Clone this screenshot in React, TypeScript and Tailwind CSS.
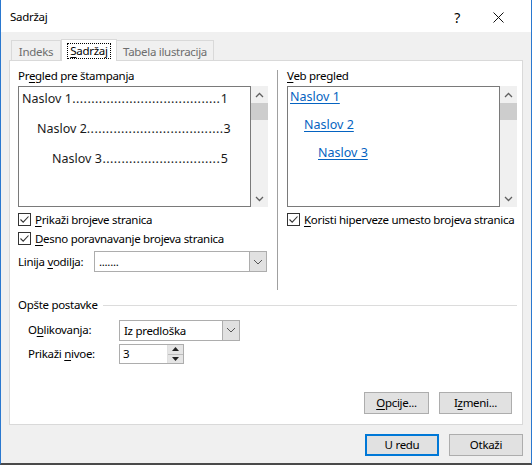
import { useState } from "react";

const font = { fontFamily: '"Noto Sans", "Segoe UI", sans-serif' };

function Check({ label, u }: { label: string; u: number }) {
  return (
    <div className="flex items-center h-[19px]">
      <div className="w-[13px] h-[13px] border border-[#333] bg-white flex items-center justify-center">
        <svg width="11" height="11" viewBox="0 0 11 11">
          <path d="M1.5 5.5 L4.2 8.2 L9.5 2.5" fill="none" stroke="#333" strokeWidth="1.1" />
        </svg>
      </div>
      <span className="ml-[4px] text-[11.5px] text-black">
        <Acc text={label} i={u} />
      </span>
    </div>
  );
}

// underline one access-key letter
function Acc({ text, i }: { text: string; i: number }) {
  return (
    <>
      {text.slice(0, i)}
      <span className="underline underline-offset-2">{text[i]}</span>
      {text.slice(i + 1)}
    </>
  );
}

function Chevron({ up }: { up?: boolean }) {
  return (
    <svg width="9" height="6" viewBox="0 0 9 6">
      <path d={up ? "M1 5 L4.5 1.5 L8 5" : "M1 1 L4.5 4.5 L8 1"} fill="none" stroke="#606060" strokeWidth="1.3" />
    </svg>
  );
}

function Scrollbar() {
  return (
    <div className="w-[17px] bg-[#f0f0f0] flex flex-col items-center">
      <div className="h-[17px] flex items-center justify-center">
        <Chevron up />
      </div>
      <div className="w-[17px] h-[17px] bg-[#cdcdcd]" />
      <div className="flex-1" />
      <div className="h-[17px] flex items-center justify-center">
        <Chevron />
      </div>
    </div>
  );
}

function Select({ value, w }: { value: string; w: string }) {
  return (
    <div className={`${w} h-[21px] border border-[#adadad] bg-white flex items-stretch`}>
      <div className="flex-1 px-[4px] text-[11.5px] leading-[19px] text-black">{value}</div>
      <div className="w-[17px] bg-[#e1e1e1] border-l border-[#adadad] flex items-center justify-center">
        <svg width="10" height="6" viewBox="0 0 10 6">
          <path d="M1 1 L5 5 L9 1" fill="none" stroke="#555" strokeWidth="1" />
        </svg>
      </div>
    </div>
  );
}

function TocLine({ title, page, dots, indent }: { title: string; page: string; dots: number; indent: string }) {
  return (
    <div className={`flex items-baseline justify-between text-[12.5px] text-[#1a1a1a] h-[30px] leading-[22px] tracking-normal ${indent}`}>
      <span className="whitespace-nowrap">{title}</span>
      <span className="whitespace-nowrap tracking-[0.45px]">{".".repeat(dots)}</span>
      <span>{page}</span>
    </div>
  );
}

function Btn({ children, primary, w }: { children: React.ReactNode; primary?: boolean; w: string }) {
  return (
    <button
      className={`${w} h-[22px] bg-[#e1e1e1] text-[11.5px] text-black ${
        primary ? "border-2 border-[#0078d7]" : "border border-[#adadad]"
      }`}
    >
      {children}
    </button>
  );
}

export default function App() {
  const [tab] = useState("Sadržaj");
  return (
    <div style={font} className="w-[532px] h-[465px] bg-[#f0f0f0] border-l border-r border-[#2a78cf] border-b-2 border-b-[#4a4a4a] flex flex-col overflow-hidden tracking-[-0.3px]">
      {/* title bar */}
      <div className="h-[32px] bg-white flex items-center pl-[9px] pt-[2px] shrink-0">
        <span className="text-[11.5px] text-black">Sadržaj</span>
        <span className="ml-auto text-[14px] text-black mr-[33px]">?</span>
        <svg width="11" height="11" viewBox="0 0 11 11" className="mr-[27px]">
          <path d="M0.5 0.5 L10.5 10.5 M10.5 0.5 L0.5 10.5" stroke="#111" strokeWidth="1" />
        </svg>
      </div>

      {/* tabs */}
      <div className="flex items-end h-[29px] pl-[10px] mt-[-1px] relative z-10">
        <div className="w-[50px] h-[20px] pt-[2px] border border-b-0 border-[#d9d9d9] bg-[#f0f0f0] text-[11.5px] text-[#6d6d6d] flex items-center justify-center">
          Indeks
        </div>
        <div className="w-[56px] h-[22px] border border-b-0 border-[#d9d9d9] bg-white text-[11.5px] text-black flex items-center justify-center mb-[-1px] pt-[1px]">
          <span className="border border-dotted border-black px-[2px] leading-[14px]">
            <Acc text={tab} i={0} />
          </span>
        </div>
        <div className="w-[97px] h-[20px] pt-[2px] border border-b-0 border-l-0 border-[#d9d9d9] bg-[#f0f0f0] text-[11.5px] text-[#6d6d6d] flex items-center justify-center">
          Tabela ilustracija
        </div>
      </div>

      {/* panel */}
      <div className="ml-[8px] w-[514px] h-[365px] bg-white border border-[#d9d9d9] flex flex-col shrink-0">
        <div className="flex h-[235px] pt-[7px]">
          {/* left column */}
          <div className="w-[267px] pl-[8px] flex flex-col">
            <div className="text-[11.5px] text-black h-[18px] leading-[16px]">
              <Acc text="Pregled pre štampanja" i={2} />
            </div>
            <div className="flex h-[121px]">
              <div className="w-[233px] border border-[#7a7a7a] pl-[3px] pr-[22px] pt-[1px]">
                <TocLine title="Naslov 1 " page="1" dots={39} indent="" />
                <TocLine title="Naslov 2" page="3" dots={36} indent="pl-[15px]" />
                <TocLine title="Naslov 3" page="5" dots={31} indent="pl-[30px]" />
              </div>
              <Scrollbar />
            </div>
            <div className="mt-[3px] flex flex-col">
              <Check label="Prikaži brojeve stranica" u={0} />
              <Check label="Desno poravnavanje brojeva stranica" u={0} />
            </div>
            <div className="flex items-center mt-[3px]">
              <span className="text-[11.5px] text-black w-[76px]">
                <Acc text="Linija vodilja:" i={7} />
              </span>
              <Select value="......." w="w-[173px]" />
            </div>
          </div>

          {/* divider */}
          <div className="w-px bg-[#a0a0a0] mt-[2px] mb-[6px]" />

          {/* right column */}
          <div className="flex-1 pl-[9px] flex flex-col">
            <div className="text-[11.5px] text-black h-[18px] leading-[16px]">
              <Acc text="Veb pregled" i={0} />
            </div>
            <div className="flex h-[121px]">
              <div className="w-[213px] border border-[#7a7a7a] pl-[2px] text-[12.5px] tracking-normal text-[#0563c1] flex flex-col items-start">
                <span className="h-[28px] leading-[20px] underline underline-offset-2">Naslov 1</span>
                <span className="h-[28px] leading-[20px] underline underline-offset-2 ml-[14px]">Naslov 2</span>
                <span className="h-[28px] leading-[20px] underline underline-offset-2 ml-[28px]">Naslov 3</span>
              </div>
              <Scrollbar />
            </div>
            <div className="mt-[3px]">
              <Check label="Koristi hiperveze umesto brojeva stranica" u={0} />
            </div>
          </div>
        </div>

        {/* general options */}
        <div className="flex items-center pl-[8px] pr-[5px] h-[18px]">
          <span className="text-[11.5px] text-black">Opšte postavke</span>
          <div className="flex-1 h-px bg-[#dcdcdc] ml-[5px]" />
        </div>
        <div className="pl-[18px] flex flex-col mt-[4px]">
          <div className="flex items-center h-[24px]">
            <span className="w-[91px] text-[11.5px] text-black">
              <Acc text="Oblikovanja:" i={1} />
            </span>
            <Select value="Iz predloška" w="w-[121px]" />
          </div>
          <div className="flex items-center h-[24px]">
            <span className="w-[91px] text-[11.5px] text-black">
              <Acc text="Prikaži nivoe:" i={8} />
            </span>
            <div className="w-[65px] h-[20px] border border-[#adadad] bg-white flex">
              <div className="flex-1 px-[3px] text-[11.5px] leading-[18px]">3</div>
              <div className="w-[16px] flex flex-col border-l border-[#e0e0e0]">
                <div className="flex-1 bg-[#e5e5e5] border-b border-[#bdbdbd] flex items-center justify-center">
                  <svg width="7" height="4" viewBox="0 0 7 4"><path d="M0 4 L3.5 0 L7 4Z" fill="#222" /></svg>
                </div>
                <div className="flex-1 bg-[#e5e5e5] flex items-center justify-center">
                  <svg width="7" height="4" viewBox="0 0 7 4"><path d="M0 0 L3.5 4 L7 0Z" fill="#222" /></svg>
                </div>
              </div>
            </div>
          </div>
        </div>

        <div className="flex-1" />
        <div className="flex justify-end gap-[10px] pr-[10px] pb-[10px]">
          <Btn w="w-[65px]"><Acc text="Opcije..." i={0} /></Btn>
          <Btn w="w-[73px]"><Acc text="Izmeni..." i={1} /></Btn>
        </div>
      </div>

      {/* dialog buttons */}
      <div className="flex justify-end gap-[10px] pr-[8px] mt-[9px]">
        <Btn w="w-[74px]" primary>U redu</Btn>
        <Btn w="w-[74px]">Otkaži</Btn>
      </div>
    </div>
  );
}
